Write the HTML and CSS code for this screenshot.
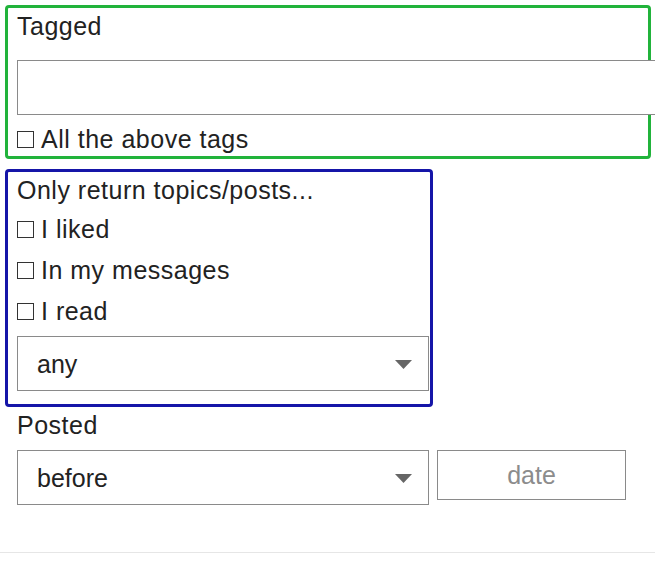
FILE: index.html
```html
<!DOCTYPE html>
<html lang="en">
<head>
  <meta charset="UTF-8">
  <title>Search filters</title>
  <link rel="stylesheet" href="styles.css">
</head>
<body>
  <form class="search-filters">
    <section class="group group-tags">
      <label class="group-label" for="tags">Tagged</label>
      <input class="tag-input" id="tags" type="text">
      <label class="check-row"><input type="checkbox"> All the above tags</label>
    </section>

    <section class="group group-status">
      <div class="group-label">Only return topics/posts...</div>
      <label class="check-row"><input type="checkbox"> I liked</label>
      <label class="check-row"><input type="checkbox"> In my messages</label>
      <label class="check-row"><input type="checkbox"> I read</label>
      <div class="select-box status-select">
        <select><option>any</option></select>
        <svg class="caret" width="17" height="9" viewBox="0 0 17 9"><path d="M0 0h17L8.5 9z"/></svg>
      </div>
    </section>

    <section class="posted">
      <div class="group-label">Posted</div>
      <div class="posted-row">
        <div class="select-box">
          <select><option>before</option></select>
          <svg class="caret" width="17" height="9" viewBox="0 0 17 9"><path d="M0 0h17L8.5 9z"/></svg>
        </div>
        <input class="date-input" type="text" placeholder="date">
      </div>
    </section>
  </form>
  <div class="footer-line"></div>
</body>
</html>
```

FILE: styles.css
```css
:root {
  --text-color: #222;
  --field-border: #8a8a8a;
  --green: #21b33b;
  --blue: #1515a8;
}
body {
  margin: 0;
  font-family: "Liberation Sans", Arial, sans-serif;
  font-size: 25px;
  letter-spacing: 0.5px;
  color: var(--text-color);
  background: #fff;
  overflow: hidden;
}
.search-filters {
  padding: 5px 0 0 5px;
}
.group {
  border: 3px solid;
  border-radius: 4px;
  padding: 0 0 0 9px;
}
.group-tags {
  width: 631px;
  height: 148px;
  border-color: var(--green);
}
.group-status {
  width: 413px;
  height: 232px;
  margin-top: 10px;
  border-color: var(--blue);
}
.group-label {
  display: flex;
  align-items: center;
  height: 36px;
}
.group-tags .group-label {
  margin-bottom: 16px;
}
.tag-input {
  display: block;
  box-sizing: border-box;
  width: 660px;
  height: 55px;
  margin: 0;
  border: 1px solid var(--field-border);
  font: inherit;
}
.check-row {
  display: flex;
  align-items: center;
  box-sizing: border-box;
  height: 41px;
  padding-top: 1px;
}
.check-row input {
  appearance: none;
  width: 17px;
  height: 17px;
  margin: 0 7px 0 0;
  border: 1px solid #333;
  background: #fff;
}
.group-tags .check-row {
  margin-top: 3px;
}
.select-box {
  position: relative;
  width: 412px;
  height: 55px;
}
.status-select {
  margin-top: 5px;
}
.select-box select {
  appearance: none;
  box-sizing: border-box;
  width: 100%;
  height: 100%;
  margin: 0;
  padding: 0 0 0 19px;
  border: 1px solid var(--field-border);
  border-radius: 0;
  background: #fff;
  font: inherit;
  color: var(--text-color);
}
.caret {
  position: absolute;
  right: 17px;
  top: 24px;
  fill: #666;
}
.posted {
  padding-left: 12px;
}
.posted .group-label {
  height: 36px;
  margin-bottom: 7px;
}
.posted-row {
  display: flex;
  align-items: flex-start;
  gap: 8px;
}
.date-input {
  box-sizing: border-box;
  width: 189px;
  height: 50px;
  margin: 0;
  border: 1px solid var(--field-border);
  font: inherit;
  text-align: center;
}
.date-input::placeholder {
  color: #8c8c8c;
}
.footer-line {
  margin-top: 47px;
  height: 1px;
  background: #e6e6e6;
}
```
